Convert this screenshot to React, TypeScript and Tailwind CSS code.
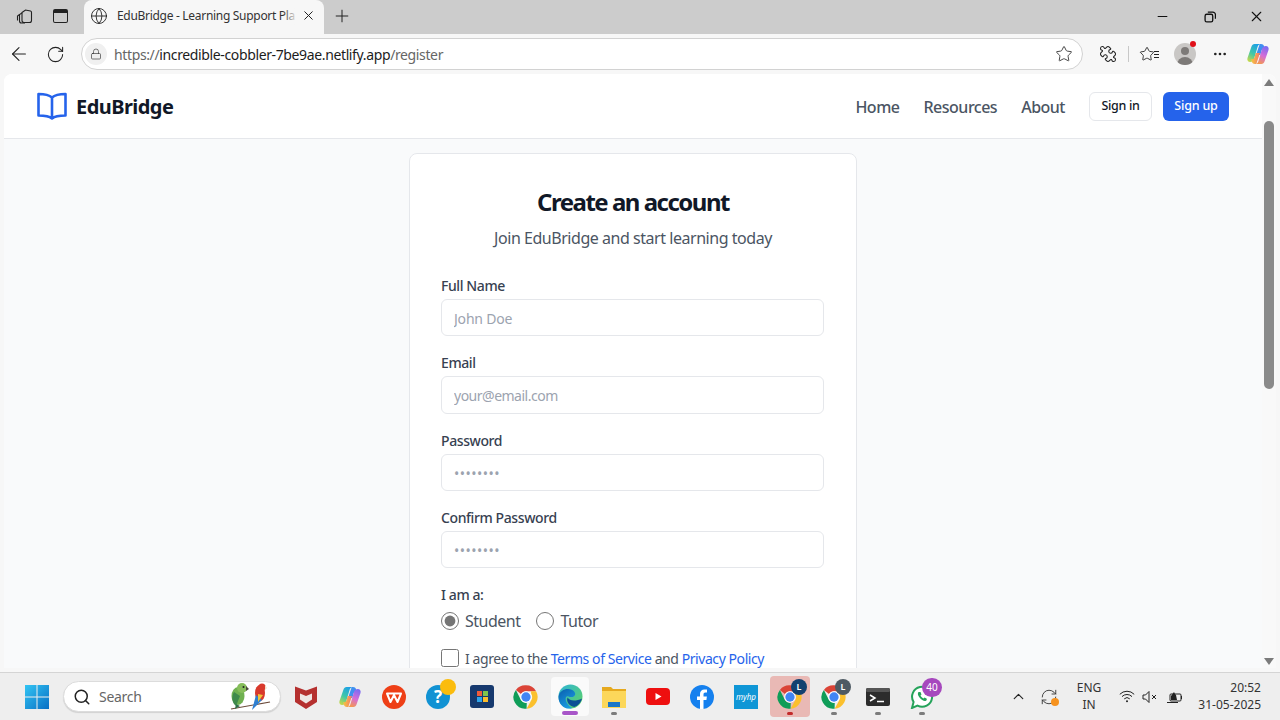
import type { ReactNode } from "react";
import {
  ArrowLeft,
  ChevronUp,
  Ellipsis,
  Globe,
  Lock,
  Minus,
  Plus,
  Puzzle,
  RefreshCw,
  RotateCw,
  Search,
  Star,
  X,
} from "lucide-react";

function Chrome({ size = 28 }: { size?: number }) {
  return (
    <svg width={size} height={size} viewBox="0 0 48 48">
      <path d="M24 4a20 20 0 0 1 17.3 10H24a10 10 0 0 0-8.7 5L6.7 11.9A20 20 0 0 1 24 4z" fill="#db4437" />
      <path d="M41.3 14A20 20 0 0 1 25 44l8.3-15A10 10 0 0 0 33 19l-.5-5z" fill="#fbc02d" />
      <path d="M6.7 11.9 15.3 29a10 10 0 0 0 10 5L25 44A20 20 0 0 1 6.7 11.9z" fill="#0f9d58" />
      <circle cx="24" cy="24" r="10" fill="#fff" />
      <circle cx="24" cy="24" r="8" fill="#4285f4" />
    </svg>
  );
}

function Copilot({ size = 24 }: { size?: number }) {
  return (
    <svg width={size} height={size} viewBox="0 0 24 24">
      <defs>
        <linearGradient id="cpL" x1="0.7" y1="0" x2="0.2" y2="1">
          <stop offset="0" stopColor="#1c9fe8" />
          <stop offset="0.55" stopColor="#3fc8a8" />
          <stop offset="1" stopColor="#c6d84a" />
        </linearGradient>
        <linearGradient id="cpR" x1="0.7" y1="0" x2="0.3" y2="1">
          <stop offset="0" stopColor="#7b6cf2" />
          <stop offset="0.5" stopColor="#d56cd8" />
          <stop offset="1" stopColor="#f59a4a" />
        </linearGradient>
        <linearGradient id="cpB" x1="0" y1="0.5" x2="1" y2="0.5">
          <stop offset="0" stopColor="#f7c83f" />
          <stop offset="1" stopColor="#f2786a" />
        </linearGradient>
      </defs>
      <path d="M8.5 2H15c-1.6 0-2.8 1-3.3 2.6L8 17c-.5 2-2 3-3.8 3C2 20 .8 18 1.5 16L5.5 4.5C6 3 7 2 8.5 2z" fill="url(#cpL)" />
      <path d="M13.7 2H15c1.5 0 2.6.8 3.1 2.2L19 7c-1.5-.6-3 .1-3.4 1.6L14.3 13H10z" fill="#3f8ff0" />
      <path d="M15.5 22H9c1.6 0 2.8-1 3.3-2.6L16 7c.5-2 2-3 3.8-3 2.2 0 3.4 2 2.7 4l-4 11.5c-.5 1.5-1.5 2.5-3 2.5z" fill="url(#cpR)" />
      <path d="M10.3 22H9c-1.5 0-2.6-.8-3.1-2.2L5 17c1.5.6 3-.1 3.4-1.6L9.7 11H14z" fill="url(#cpB)" />
    </svg>
  );
}

function Parrots() {
  return (
    <svg width="42" height="30" viewBox="0 0 42 30">
      <path d="M1 27 L40 20" stroke="#6b4a3a" strokeWidth="1.2" />
      <ellipse cx="8" cy="14" rx="6.5" ry="9" fill="#6fb050" />
      <path d="M4 10 C1 15 2 21 6 24 L10 14z" fill="#3f8a4c" />
      <circle cx="12" cy="6" r="5" fill="#86bd5a" />
      <path d="M16 4 L19 7 L16 9z" fill="#4a4a3a" />
      <circle cx="13.5" cy="5" r="1" fill="#222" />
      <path d="M6 22 L5 27 L10 24z" fill="#2f6f48" />
      <ellipse cx="30" cy="11" rx="5" ry="8" fill="#d8392c" />
      <circle cx="32" cy="5" r="3.6" fill="#d8392c" />
      <path d="M26 13 L22 28 L32 18z" fill="#2f7fd0" />
      <path d="M28 12 L33 13 L28 20z" fill="#f0c43a" />
      <path d="M35 3 L37 6 L35 8z" fill="#eee0c8" />
    </svg>
  );
}

function Slot({ children, className = "" }: { children?: ReactNode; className?: string }) {
  return (
    <div className={`relative flex h-[47px] w-[44px] shrink-0 items-center justify-center ${className}`}>
      {children}
    </div>
  );
}

function Dot({ className = "bg-[#7b7b7b]" }: { className?: string }) {
  return <span className={`absolute bottom-[5px] left-1/2 h-[3px] w-[6px] -translate-x-1/2 rounded-full ${className}`} />;
}

function Taskbar() {
  return (
    <div className="flex h-[48px] shrink-0 items-center border-t border-[#d4d4d4] bg-[#eeeeee]">
      <div className="ml-[15px] flex h-[47px] w-[44px] items-center justify-center">
        <svg width="24" height="24" viewBox="0 0 24 24">
          <defs>
            <linearGradient id="win" x1="0" y1="0" x2="1" y2="1">
              <stop offset="0" stopColor="#32c5f4" />
              <stop offset="1" stopColor="#0a6fc4" />
            </linearGradient>
          </defs>
          <path d="M0 0h11.5v11.5H0zM12.5 0H24v11.5H12.5zM0 12.5h11.5V24H0zM12.5 12.5H24V24H12.5z" fill="url(#win)" />
        </svg>
      </div>
      <div className="ml-[4px] flex h-[31px] w-[218px] items-center rounded-full border border-[#dcdcdc] bg-white pl-[9px] shadow-[0_1px_1px_rgba(0,0,0,0.12)]">
        <Search size={18} strokeWidth={2} className="text-[#222]" />
        <span className="ml-[8px] flex-1 text-[14px] tracking-[-0.3px] text-[#666]">Search</span>
        <span className="mr-[8px] flex">
          <Parrots />
        </span>
      </div>
      <div className="ml-[3px] flex items-center">
        <Slot>
          <svg width="22" height="24" viewBox="0 0 22 24">
            <path d="M0 1.5 L11 5.5 L22 1.5 V17 L11 24 L0 17z" fill="#b5302f" />
            <path d="M5 8.5 L11 11 L17 8.5 V14.5 L11 18.5 L5 14.5z" fill="#efe6e4" />
          </svg>
        </Slot>
        <Slot>
          <Copilot />
        </Slot>
        <Slot>
          <svg width="24" height="24" viewBox="0 0 24 24">
            <circle cx="12" cy="12" r="12" fill="#ee3f16" />
            <path d="M5 8.5 L8.5 17 L12 10 L15.5 17 L19 8.5 Z" fill="none" stroke="#fff" strokeWidth="2" strokeLinejoin="round" />
          </svg>
        </Slot>
        <Slot>
          <div className="flex h-[24px] w-[24px] items-center justify-center rounded-full bg-[#1192d3] text-[17px] font-bold text-white">
            ?
          </div>
          <span className="absolute right-[4px] top-[6px] h-[16px] w-[16px] rounded-full bg-[#fbbc0d]" />
        </Slot>
        <Slot>
          <div className="flex h-[23px] w-[24px] items-center justify-center rounded-[3px] bg-[#16396e]">
            <div className="grid grid-cols-2 gap-[1px]">
              <span className="h-[5px] w-[5px] bg-[#ef5b3a]" />
              <span className="h-[5px] w-[5px] bg-[#7fc34b]" />
              <span className="h-[5px] w-[5px] bg-[#2ea4ea]" />
              <span className="h-[5px] w-[5px] bg-[#fbbc2c]" />
            </div>
          </div>
        </Slot>
        <Slot>
          <Chrome />
        </Slot>
        <Slot>
          <span className="absolute inset-x-[3px] inset-y-[4px] rounded-[4px] bg-[#fafafa]" />
          <svg className="relative" width="25" height="25" viewBox="0 0 26 26">
            <defs>
              <linearGradient id="edge" x1="0" y1="0" x2="1" y2="1">
                <stop offset="0" stopColor="#2fb5d8" />
                <stop offset="1" stopColor="#5fd35f" />
              </linearGradient>
              <linearGradient id="edge2" x1="0" y1="0" x2="0.6" y2="1">
                <stop offset="0" stopColor="#0a5fae" />
                <stop offset="1" stopColor="#1b9de2" />
              </linearGradient>
            </defs>
            <circle cx="13" cy="13" r="12.5" fill="url(#edge)" />
            <path d="M.6 13 C1.5 5 13 3 17 8 C20 12 15 15 11 13 C6 11 7 21 15 25 C7 27.5 0 21 .6 13z" fill="url(#edge2)" />
            <path d="M10 14 C12 18 19 18 25 15 C24 19 21 22.5 17 24 C12 23 8 18 10 14z" fill="#0c4f96" />
          </svg>
          <span className="absolute bottom-[5px] left-1/2 h-[4px] w-[16px] -translate-x-1/2 rounded-full bg-[#a855c8]" />
        </Slot>
        <Slot>
          <svg width="24" height="23" viewBox="0 0 24 23">
            <path d="M0 2h9l2 2h13v19H0z" fill="#e6a91e" />
            <path d="M0 6h24v17H0z" fill="#fcd75a" />
            <path d="M6 17h12v5H6z" fill="#1976c8" />
          </svg>
          <Dot />
        </Slot>
        <Slot>
          <svg width="24" height="17" viewBox="0 0 24 17">
            <rect width="24" height="17" rx="4" fill="#ee0f0f" />
            <path d="M9.5 5 L15.5 8.5 L9.5 12z" fill="#fff" />
          </svg>
        </Slot>
        <Slot>
          <svg width="24" height="24" viewBox="0 0 24 24">
            <circle cx="12" cy="12" r="12" fill="#1580ee" />
            <path d="M10 24V15H7v-3.5h3V9c0-3 1.8-4.6 4.5-4.6.9 0 1.8.1 2.5.2v3h-1.6c-1.4 0-1.9.9-1.9 1.8v2.1h3.4l-.5 3.5h-2.9v9z" fill="#fff" />
          </svg>
        </Slot>
        <Slot>
          <div className="flex h-[24px] w-[24px] items-center justify-center bg-[#0f96d6] text-[8px] text-white italic">
            myhp
          </div>
        </Slot>
        <Slot>
          <span className="absolute inset-x-[2px] inset-y-[3px] rounded-[4px] bg-[#e9b9b5]" />
          <span className="relative flex">
            <Chrome />
          </span>
          <span className="absolute right-[5px] top-[6px] flex h-[16px] w-[16px] items-center justify-center rounded-full bg-[#12406f] text-[9px] font-semibold text-white">
            L
          </span>
          <Dot className="bg-[#c22a2a]" />
        </Slot>
        <Slot>
          <Chrome />
          <span className="absolute right-[5px] top-[6px] flex h-[16px] w-[16px] items-center justify-center rounded-full bg-[#4e5a63] text-[9px] font-semibold text-white">
            L
          </span>
          <Dot />
        </Slot>
        <Slot>
          <svg width="24" height="18" viewBox="0 0 24 18">
            <rect width="24" height="18" rx="2" fill="#2c2c2c" />
            <rect width="24" height="4" rx="1.5" fill="#555" />
            <path d="M4 7 L9 10 L4 13" fill="none" stroke="#fff" strokeWidth="1.5" />
            <path d="M11 13.5h7" stroke="#fff" strokeWidth="1.5" />
          </svg>
          <Dot />
        </Slot>
        <Slot>
          <svg width="24" height="24" viewBox="0 0 24 24" fill="none">
            <path d="M2 23 L3.6 17 A10 10 0 1 1 7.5 20.6z" stroke="#25a35a" strokeWidth="2" fill="#fff" />
            <path d="M8.5 7c-1 1-1 3 1 5.5s4.5 4 6 3.5 1.5-2 1-2.5l-2-1-1 1c-1-.3-2.5-1.8-3-3l1-1-1-2.5z" fill="#25a35a" />
          </svg>
          <span className="absolute right-[2px] top-[5px] flex h-[19px] w-[20px] items-center justify-center rounded-full bg-[#a648bd] text-[10px] text-white">
            40
          </span>
          <Dot />
        </Slot>
      </div>
      <div className="ml-auto flex items-center">
        <ChevronUp size={17} strokeWidth={1.6} className="text-[#222]" />
        <span className="relative ml-[13px] flex">
          <RefreshCw size={18} strokeWidth={1.2} className="text-[#333]" />
          <span className="absolute bottom-0 right-[-1px] h-[8px] w-[8px] rounded-full bg-[#f6921e]" />
        </span>
        <div className="ml-[13px] w-[36px] text-center text-[12px] leading-[16.5px] text-[#333]">
          ENG
          <br />
          IN
        </div>
        <svg className="ml-[12px]" width="16" height="13" viewBox="0 0 16 13" fill="none" stroke="#222" strokeWidth="1">
          <path d="M.8 4.3a10 10 0 0 1 14.4 0M3 6.6a7 7 0 0 1 10 0M5.2 8.9a4 4 0 0 1 5.6 0" />
          <circle cx="8" cy="11.3" r="1" fill="#222" stroke="none" />
        </svg>
        <svg className="ml-[7px]" width="16" height="14" viewBox="0 0 16 14" fill="none" stroke="#222" strokeWidth="1">
          <path d="M1 5h2.5L7 1.5v11L3.5 9H1zM10 5l4 4M14 5l-4 4" />
        </svg>
        <svg className="ml-[9px]" width="16" height="14" viewBox="0 0 16 14" fill="none" stroke="#222">
          <rect x="3" y="4" width="11" height="7" rx="1" />
          <path d="M14.5 6v3M0 12.5h11" />
          <path d="M4 10V6l3-4 1 2 1 1 1 5z" fill="#222" stroke="none" />
        </svg>
        <div className="ml-[8px] mr-[19px] w-[70px] text-right text-[12px] leading-[16.5px] text-[#333]">
          20:52
          <br />
          31-05-2025
        </div>
      </div>
    </div>
  );
}

function Field({
  label,
  placeholder,
  tracking = "tracking-[-0.3px]",
}: {
  label: string;
  placeholder: string;
  tracking?: string;
}) {
  return (
    <div>
      <label className="block h-[20px] text-[14px] leading-[20px] font-medium tracking-[-0.4px] text-[#374151]">
        {label}
      </label>
      <input
        type="text"
        placeholder={placeholder}
        className={`mt-[3px] block h-[37.33px] w-full rounded-[6px] border border-[#e5e7eb] bg-white px-[12px] pt-[2px] text-[14px] placeholder:text-[#9ca3af] ${tracking}`}
      />
    </div>
  );
}

function Page() {
  return (
    <div className="mx-[4px] flex h-[594px] overflow-hidden rounded-t-[8px] bg-white">
      <div className="flex min-w-0 flex-1 flex-col">
        <header className="flex h-[65px] shrink-0 items-center border-b border-[#e5e7eb] bg-white pl-[33px] pr-[33px]">
          <svg width="30" height="28" viewBox="0 0 30 28" fill="none" stroke="#2563eb" strokeWidth="2.6">
            <path d="M15 5.5C12 2.8 6 2 1.5 2v21.5c5 0 10.5 .5 13.5 3 3-2.5 8.5-3 13.5-3V2C24 2 18 2.8 15 5.5zV26" strokeLinejoin="round" />
          </svg>
          <span className="ml-[9px] pt-[2px] text-[20px] font-bold tracking-[-0.55px] text-[#111827]">EduBridge</span>
          <nav className="ml-auto flex items-center gap-[24px] pt-[2px] text-[16px] font-medium tracking-[-0.5px] text-[#4b5563]">
            <span>Home</span>
            <span>Resources</span>
            <span>About</span>
          </nav>
          <button className="ml-[24px] flex h-[29px] w-[63px] items-center justify-center rounded-[6px] border border-[#e5e7eb] bg-white pt-[1px] text-[12.5px] font-medium tracking-[-0.3px] text-[#111827]">
            Sign in
          </button>
          <button className="ml-[11px] flex h-[29px] w-[66px] items-center justify-center rounded-[6px] bg-[#2563eb] pt-[1px] text-[12.5px] font-medium tracking-[-0.2px] text-white">
            Sign up
          </button>
        </header>
        <main className="flex-1 overflow-hidden bg-[#f9fafb] pt-[14px]">
          <div className="mx-auto h-[700px] w-[448px] rounded-[8px] border border-[#e5e7eb] bg-white px-[31px] pt-[32px]">
            <h1 className="text-center text-[24px] leading-[32px] font-bold tracking-[-1.5px] text-[#111827]">
              Create an account
            </h1>
            <p className="mt-[8px] text-center text-[16px] leading-[24px] tracking-[-0.46px] text-[#4b5563]">
              Join EduBridge and start learning today
            </p>
            <div className="mt-[26px] flex w-[383px] flex-col gap-[17px]">
              <Field label="Full Name" placeholder="John Doe" tracking="tracking-[-0.2px]" />
              <Field label="Email" placeholder="your@email.com" tracking="tracking-[-0.5px]" />
              <Field label="Password" placeholder="••••••••" tracking="tracking-[0.5px]" />
              <Field label="Confirm Password" placeholder="••••••••" tracking="tracking-[0.5px]" />
              <div>
                <div className="h-[20px] text-[14px] leading-[20px] font-medium tracking-[-0.4px] text-[#374151]">I am a:</div>
                <div className="mt-[4px] flex h-[24px] items-center text-[16px] tracking-[-0.5px] text-[#4b5563]">
                  <input type="radio" name="role" defaultChecked className="m-0 h-[18px] w-[18px] accent-[#757575]" />
                  <span className="ml-[6px]">Student</span>
                  <input type="radio" name="role" className="m-0 ml-[16px] h-[18px] w-[18px] accent-[#757575]" />
                  <span className="ml-[6px]">Tutor</span>
                </div>
              </div>
              <div className="mt-[-2px] flex h-[20px] items-center text-[14px] tracking-[-0.43px] text-[#4b5563]">
                <input type="checkbox" className="m-0 h-[18px] w-[18px] accent-[#757575]" />
                <span className="ml-[6px]">
                  I agree to the <span className="text-[#2563eb]">Terms of Service</span> and{" "}
                  <span className="text-[#2563eb]">Privacy Policy</span>
                </span>
              </div>
            </div>
          </div>
        </main>
      </div>
      <div className="flex w-[14px] shrink-0 flex-col items-center bg-[#f9f9f9]">
        <span className="mt-[5px] h-0 w-0 border-x-[5px] border-b-[7px] border-x-transparent border-b-[#7b7b7b]" />
        <span className="mt-[35px] h-[268px] w-[10px] rounded-full bg-[#8a8a8a]" />
        <span className="mt-auto mb-[3px] h-0 w-0 border-x-[5px] border-t-[7px] border-x-transparent border-t-[#7b7b7b]" />
      </div>
    </div>
  );
}

export default function App() {
  return (
    <div className="flex h-[720px] w-[1280px] flex-col overflow-hidden bg-[#f7f7f7] font-['Noto_Sans',sans-serif]">
      {/* tab strip */}
      <div className="flex h-[34px] shrink-0 bg-[#cccccc]">
        <svg className="ml-[16px] mt-[8px]" width="17" height="17" viewBox="0 0 17 17" fill="none" stroke="#222" strokeWidth="1.1">
          <path d="M6 4.5 9.5 2l5 1a1.5 1.5 0 0 1 1 1.5v8a2 2 0 0 1-2 2H8a2 2 0 0 1-2-2z" />
          <path d="M6 5 3.5 6.5v6.5a2 2 0 0 0 2 2H9M3.5 6.5 1.5 8v4.5" />
        </svg>
        <div className="ml-[20px] mt-[9px] h-[14px] w-[15px] rounded-[2px] border-[1.5px] border-[#222] border-t-[4px]" />
        <div className="ml-[16px] flex h-[34px] w-[240px] items-center rounded-t-[8px] bg-[#f7f7f7] pb-[3px] pl-[6px]">
          <Globe size={18} strokeWidth={1.2} className="text-[#222]" />
          <span className="relative ml-[9px] w-[180px] overflow-hidden text-[12px] tracking-[-0.3px] whitespace-nowrap text-[#333]">
            EduBridge - Learning Support Pla
            <span className="absolute inset-y-0 right-0 w-[14px] bg-gradient-to-r from-transparent to-[#f7f7f7]" />
          </span>
          <X size={15} strokeWidth={1.6} className="ml-[4px] text-[#222]" />
        </div>
        <Plus size={20} strokeWidth={1.2} className="ml-[8px] mt-[6px] text-[#222]" />
        <Minus size={15} strokeWidth={1.8} className="ml-auto mt-[9px] text-[#111]" />
        <svg className="ml-[34px] mt-[11px]" width="12" height="12" viewBox="0 0 11 11" fill="none" stroke="#111" strokeWidth="1.2">
          <rect x="1" y="3" width="7" height="7" rx="1.5" />
          <path d="M3.5 1H8a2.5 2.5 0 0 1 2.5 2.5V7" />
        </svg>
        <X size={17} strokeWidth={1.5} className="ml-[32px] mt-[8px] mr-[15px] text-[#111]" />
      </div>
      {/* toolbar */}
      <div className="flex h-[40px] shrink-0 items-center bg-[#f7f7f7]">
        <ArrowLeft size={22} strokeWidth={1.2} className="ml-[8px] text-[#222]" />
        <RotateCw size={19} strokeWidth={1.3} className="ml-[16px] text-[#222]" />
        <div className="ml-[16px] flex h-[32px] w-[1002px] items-center rounded-full border border-[#d2d2d2] bg-white pl-[3px] pr-[9px]">
          <span className="flex h-[22px] w-[22px] items-center justify-center rounded-full bg-[#f0f0f0]">
            <Lock size={12} strokeWidth={1.3} className="text-[#333]" />
          </span>
          <span className="ml-[7px] text-[14px] tracking-[-0.37px] text-[#666]">
            https://<span className="text-[#1c1c1c]">incredible-cobbler-7be9ae.netlify.app</span>/register
          </span>
          <Star size={18} strokeWidth={1.2} className="ml-auto text-[#333]" />
        </div>
        <Puzzle size={18} strokeWidth={1.4} className="ml-[16px] -scale-x-100 text-[#222]" />
        <span className="ml-[11px] h-[16px] w-px bg-[#c8c8c8]" />
        <span className="ml-[10px] flex items-center">
          <Star size={16} strokeWidth={1.3} className="text-[#222]" />
          <span className="ml-[-1px] flex w-[5px] flex-col gap-[2px]">
            <span className="h-px bg-[#222]" />
            <span className="h-px bg-[#222]" />
            <span className="h-px bg-[#222]" />
          </span>
        </span>
        <span className="relative ml-[15px] flex h-[22px] w-[22px] items-end justify-center overflow-hidden rounded-full bg-[#c9c7c5]">
          <span className="absolute left-[7px] top-[4px] h-[8px] w-[8px] rounded-full bg-[#7d7a78]" />
          <span className="h-[8px] w-[16px] rounded-t-full bg-[#7d7a78]" />
        </span>
        <span className="relative left-[-6px] top-[-10px] h-[6px] w-[6px] rounded-full bg-[#e0101a]" />
        <Ellipsis size={16} strokeWidth={2} className="ml-[10px] text-[#222]" />
        <span className="ml-[18px] flex">
          <Copilot />
        </span>
      </div>
      <Page />
      <div className="flex-1" />
      <Taskbar />
    </div>
  );
}
